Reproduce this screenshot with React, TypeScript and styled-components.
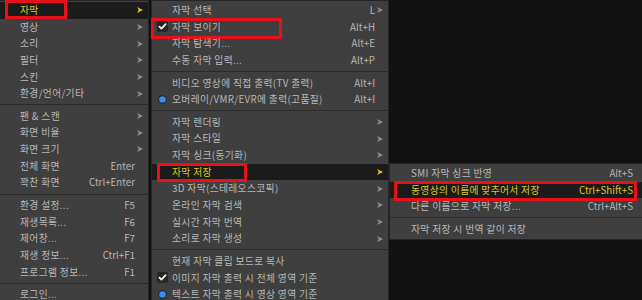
import React from 'react';
import styled, { createGlobalStyle } from 'styled-components';

const GlobalStyle = createGlobalStyle`
  html,
  body {
    margin: 0;
    padding: 0;
    width: 642px;
    height: 300px;
    overflow: hidden;
    background: #121212;
  }
`;

type Item =
  | { sep: true }
  | {
      sep?: false;
      label: string;
      shortcut?: string;
      arrow?: boolean;
      active?: boolean;
      icon?: 'check' | 'radio';
      box?: { left: number; top: number; width: number; height: number };
    };

const ROW = 16.65;

const Screen = styled.div`
  display: flex;
  align-items: flex-start;
  font-family: 'Noto Sans CJK KR', 'Noto Sans', sans-serif;
  font-size: 9.75px;
`;

const Panel = styled.div<{ $width: number; $top?: number; $gap?: number }>`
  box-sizing: border-box;
  flex-shrink: 0;
  width: ${(p) => p.$width}px;
  margin-top: ${(p) => p.$top ?? 0}px;
  margin-left: ${(p) => p.$gap ?? 0}px;
  padding: 1px 0;
  background: #3f3f3f;
  border: 1px solid #262626;
`;

const Row = styled.div<{ $active?: boolean; $iconCol: number }>`
  position: relative;
  display: grid;
  grid-template-columns: ${(p) => p.$iconCol}px 1fr auto 13px;
  align-items: center;
  height: ${ROW}px;
  line-height: ${ROW}px;
  white-space: nowrap;
  color: ${(p) => (p.$active ? '#d8cb1c' : '#b7b7b7')};
  background: ${(p) => (p.$active ? '#1b1b1b' : 'transparent')};
`;

const IconCell = styled.span`
  display: flex;
  align-items: center;
  justify-content: center;
  height: 100%;
`;

const Label = styled.span`
  overflow: hidden;
  letter-spacing: 0.35px;
`;

const Shortcut = styled.span`
  text-align: right;
`;

const ArrowCell = styled.span`
  display: flex;
  align-items: center;
  padding-left: 2px;
  height: 100%;
`;

const Separator = styled.div`
  height: 6px;
  display: flex;
  align-items: center;

  &::after {
    content: '';
    flex: 1;
    height: 1px;
    background: #2a2a2a;
  }
`;

const Marker = styled.span`
  position: absolute;
  box-sizing: border-box;
  border: 3px solid #e8111b;
  pointer-events: none;
`;

const Arrow = ({ color }: { color: string }) => (
  <svg width="6" height="6" viewBox="0 0 6 6">
    <path d="M0 0 L6 3 L0 6 L1.8 3 Z" fill={color} />
  </svg>
);

const CheckIcon = () => (
  <svg width="11" height="11" viewBox="0 0 11 11">
    <rect x="0" y="0" width="11" height="11" rx="2" fill="#262626" />
    <path
      d="M2.4 5.6 L4.5 7.6 L8.6 3.2"
      fill="none"
      stroke="#f2f2f2"
      strokeWidth="1.7"
      strokeLinecap="round"
      strokeLinejoin="round"
    />
  </svg>
);

const RadioIcon = () => (
  <svg width="9" height="9" viewBox="0 0 9 9">
    <circle cx="4.5" cy="4.5" r="4.2" fill="#1f1f1f" />
    <circle cx="4.5" cy="4.5" r="3.3" fill="#3a8ef0" />
  </svg>
);

const mainMenu: Item[] = [
  { label: '자막', arrow: true, active: true, box: { left: 5, top: -2, width: 62, height: 19 } },
  { label: '영상', arrow: true },
  { label: '소리', arrow: true },
  { label: '필터', arrow: true },
  { label: '스킨', arrow: true },
  { label: '환경/언어/기타', arrow: true },
  { sep: true },
  { label: '팬 & 스캔', arrow: true },
  { label: '화면 비율', arrow: true },
  { label: '화면 크기', arrow: true },
  { label: '전체 화면', shortcut: 'Enter' },
  { label: '꽉찬 화면', shortcut: 'Ctrl+Enter' },
  { sep: true },
  { label: '환경 설정...', shortcut: 'F5' },
  { label: '재생목록...', shortcut: 'F6' },
  { label: '제어창...', shortcut: 'F7' },
  { label: '재생 정보...', shortcut: 'Ctrl+F1' },
  { label: '프로그램 정보...', shortcut: 'F1' },
  { sep: true },
  { label: '로그인...' },
];

const subtitleMenu: Item[] = [
  { label: '자막 선택', shortcut: 'L', arrow: true },
  {
    label: '자막 보이기',
    shortcut: 'Alt+H',
    icon: 'check',
    box: { left: -1, top: -1, width: 131, height: 21 },
  },
  { label: '자막 탐색기...', shortcut: 'Alt+E' },
  { label: '수동 자막 입력...', shortcut: 'Alt+P' },
  { sep: true },
  { label: '비디오 영상에 직접 출력(TV 출력)', shortcut: 'Alt+I' },
  { label: '오버레이/VMR/EVR에 출력(고품질)', shortcut: 'Alt+I', icon: 'radio' },
  { sep: true },
  { label: '자막 렌더링', arrow: true },
  { label: '자막 스타일', arrow: true },
  { label: '자막 싱크(동기화)', arrow: true },
  {
    label: '자막 저장',
    arrow: true,
    active: true,
    box: { left: 5, top: -1, width: 90, height: 19 },
  },
  { label: '3D 자막(스테레오스코픽)', arrow: true },
  { label: '온라인 자막 검색', arrow: true },
  { label: '실시간 자막 번역', arrow: true },
  { label: '소리로 자막 생성', arrow: true },
  { sep: true },
  { label: '현재 자막 클립 보드로 복사' },
  { label: '이미지 자막 출력 시 전체 영역 기준', icon: 'check' },
  { label: '텍스트 자막 출력 시 영상 영역 기준', icon: 'radio' },
];

const saveMenu: Item[] = [
  { label: 'SMI 자막 싱크 반영', shortcut: 'Alt+S' },
  {
    label: '동영상의 이름에 맞추어서 저장',
    shortcut: 'Ctrl+Shift+S',
    active: true,
    box: { left: 4, top: -1, width: 243, height: 20 },
  },
  { label: '다른 이름으로 자막 저장...', shortcut: 'Ctrl+Alt+S' },
  { sep: true },
  { label: '자막 저장 시 번역 같이 저장' },
];

const Menu = ({
  items,
  width,
  iconCol,
  top,
  gap,
}: {
  items: Item[];
  width: number;
  iconCol: number;
  top?: number;
  gap?: number;
}) => (
  <Panel $width={width} $top={top} $gap={gap}>
    {items.map((item, i) =>
      item.sep ? (
        <Separator key={i} />
      ) : (
        <Row key={i} $active={item.active} $iconCol={iconCol}>
          <IconCell>
            {item.icon === 'check' && <CheckIcon />}
            {item.icon === 'radio' && <RadioIcon />}
          </IconCell>
          <Label>{item.label}</Label>
          <Shortcut>{item.shortcut}</Shortcut>
          <ArrowCell>
            {item.arrow && <Arrow color={item.active ? '#d8cb1c' : '#8e8e8e'} />}
          </ArrowCell>
          {item.box && (
            <Marker
              style={{
                left: item.box.left,
                top: item.box.top,
                width: item.box.width,
                height: item.box.height,
              }}
            />
          )}
        </Row>
      ),
    )}
  </Panel>
);

const App: React.FC = () => (
  <>
    <GlobalStyle />
    <Screen>
      <Menu items={mainMenu} width={150} iconCol={20} gap={-1} />
      <Menu items={subtitleMenu} width={238} iconCol={20} gap={2} />
      <Menu items={saveMenu} width={258} iconCol={21} top={163} />
    </Screen>
  </>
);

export default App;
